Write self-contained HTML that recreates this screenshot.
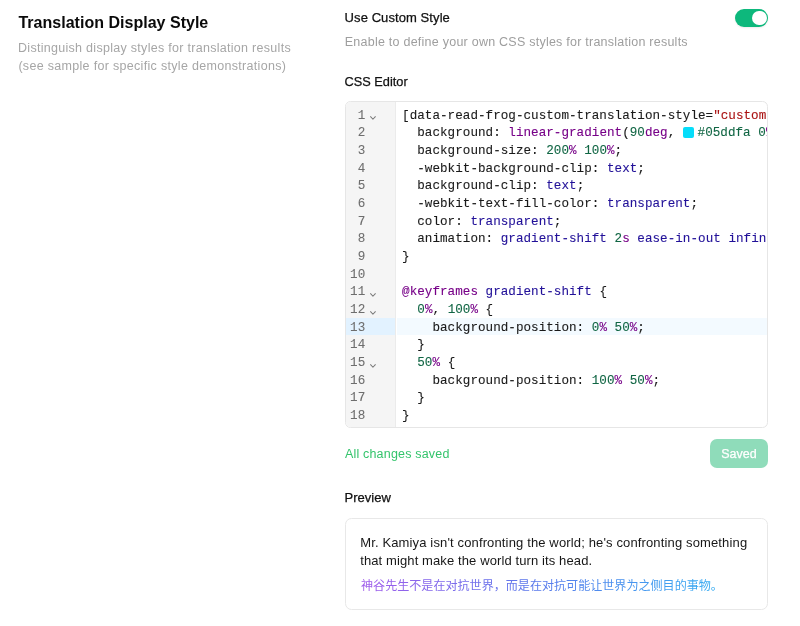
<!DOCTYPE html>
<html lang="en">
<head>
<meta charset="utf-8">
<title>Translation Display Style</title>
<style>
html,body{margin:0;padding:0;background:#fff;}
body{width:800px;height:626px;position:relative;overflow:hidden;will-change:transform;font-family:"Liberation Sans",sans-serif;color:#0a0a0a;-webkit-font-smoothing:antialiased;}
.t{position:absolute;white-space:pre;line-height:20px;margin:0;}
.title{left:18.4px;top:12.5px;font-size:16px;font-weight:700;letter-spacing:0.02px;color:#0a0a0a;}
.desc{font-size:12.5px;color:#a6a6a6;}
.d1{left:18px;top:37.7px;letter-spacing:0.29px;}
.d2{left:18.4px;top:56.4px;letter-spacing:0.31px;}
.lab{font-size:13px;color:#111;-webkit-text-stroke-width:0.25px;}
.l1{left:344.6px;top:8.2px;letter-spacing:0.08px;}
.sub{left:344.8px;top:32.1px;font-size:12.5px;letter-spacing:0.24px;color:#9e9e9e;}
.l2{left:344.6px;top:71.6px;font-size:12.75px;}
.l3{left:344.6px;top:488.3px;}
.toggle{position:absolute;left:735px;top:9px;width:33.4px;height:18.2px;border-radius:10px;background:#0db87c;box-shadow:0 1px 2px rgba(0,0,0,0.08);}
.toggle i{position:absolute;right:1.9px;top:1.8px;width:14.5px;height:14.5px;border-radius:50%;background:#fff;}
.editor{position:absolute;left:345px;top:101px;width:420.7px;height:325px;border:1px solid #e6e6e6;border-radius:5.5px;overflow:hidden;background:#fff;font-family:"Liberation Mono",monospace;font-size:12.6px;letter-spacing:0.03px;-webkit-text-stroke-width:0.1px;}
.gutter{position:absolute;left:0;top:0;bottom:0;width:48.6px;background:#f5f5f5;border-right:1px solid #ebebeb;color:#6e6e6e;-webkit-text-stroke-width:0.08px;padding-top:5.7px;}
.gl{position:relative;height:17.66px;line-height:17.66px;}
.band{position:absolute;left:0;right:0;top:215.5px;height:17.2px;}
.gutter .band{background:#e2f2ff;}
.code .band{background:#f3faff;}
.ln{position:absolute;right:29.3px;top:0;}
.fold{position:absolute;left:23.8px;top:8.7px;width:5.9px;height:4.1px;fill:none;stroke:#777;stroke-width:1.1;stroke-linecap:round;stroke-linejoin:round;}
.code{position:absolute;left:50.5px;top:0;right:0;bottom:0;padding-top:5.7px;color:#1a1a1a;}
.cl{position:relative;height:17.66px;line-height:17.66px;white-space:pre;padding-left:5.6px;}
.k{color:#770088;} .n{color:#116644;} .a{color:#221199;} .s{color:#aa1111;}
.sw{display:inline-block;width:11.4px;height:11.4px;border-radius:2px;margin-right:3.3px;vertical-align:-1.6px;}
.saved{left:344.9px;top:444px;font-size:12.5px;letter-spacing:0.19px;color:#34c46c;}
.btn{position:absolute;left:710px;top:439px;width:58px;height:28.6px;border-radius:7px;background:#8fdcba;color:#fff;font-size:12.5px;line-height:30.6px;text-align:center;-webkit-text-stroke-width:0.25px;}
.preview{position:absolute;left:345px;top:518.3px;width:420.7px;height:89.3px;border:1px solid #e8e8e8;border-radius:6.5px;background:#fff;}
.p{font-size:13px;color:#171717;letter-spacing:0.11px;}
.p1{left:360.2px;top:533.4px;letter-spacing:0.14px;}
.p2{left:360.2px;top:550.8px;}
.cjk{position:absolute;left:360.5px;top:575px;width:364px;height:20px;overflow:visible;}
.sr{position:absolute;left:360px;top:580px;font-size:1px;line-height:1px;color:transparent;white-space:pre;overflow:hidden;width:1px;height:1px;}
</style>
</head>
<body>
<h2 class="t title">Translation Display Style</h2>
<p class="t desc d1">Distinguish display styles for translation results</p>
<p class="t desc d2">(see sample for specific style demonstrations)</p>

<div class="t lab l1">Use Custom Style</div>
<p class="t sub">Enable to define your own CSS styles for translation results</p>
<div class="toggle"><i></i></div>

<div class="t lab l2">CSS Editor</div>
<div class="editor">
<div class="gutter"><div class="band"></div>
<div class="gl"><span class="ln">1</span><svg class="fold" viewBox="0 0 6.4 4.4"><path d="M0.6 0.7 L3.2 3.5 L5.8 0.7"/></svg></div>
<div class="gl"><span class="ln">2</span></div>
<div class="gl"><span class="ln">3</span></div>
<div class="gl"><span class="ln">4</span></div>
<div class="gl"><span class="ln">5</span></div>
<div class="gl"><span class="ln">6</span></div>
<div class="gl"><span class="ln">7</span></div>
<div class="gl"><span class="ln">8</span></div>
<div class="gl"><span class="ln">9</span></div>
<div class="gl"><span class="ln">10</span></div>
<div class="gl"><span class="ln">11</span><svg class="fold" viewBox="0 0 6.4 4.4"><path d="M0.6 0.7 L3.2 3.5 L5.8 0.7"/></svg></div>
<div class="gl"><span class="ln">12</span><svg class="fold" viewBox="0 0 6.4 4.4"><path d="M0.6 0.7 L3.2 3.5 L5.8 0.7"/></svg></div>
<div class="gl act"><span class="ln">13</span></div>
<div class="gl"><span class="ln">14</span></div>
<div class="gl"><span class="ln">15</span><svg class="fold" viewBox="0 0 6.4 4.4"><path d="M0.6 0.7 L3.2 3.5 L5.8 0.7"/></svg></div>
<div class="gl"><span class="ln">16</span></div>
<div class="gl"><span class="ln">17</span></div>
<div class="gl"><span class="ln">18</span></div>
</div>
<div class="code"><div class="band"></div>
<div class="cl">[data-read-frog-custom-translation-style=<span class="s">"custom-gradient"</span>] {</div>
<div class="cl">  background: <span class="k">linear-gradient</span>(<span class="n">90</span><span class="k">deg</span>, <i class="sw" style="background:#05ddfa"></i><span class="n">#05ddfa</span> <span class="n">0</span><span class="k">%</span>, <i class="sw" style="background:#8b5cf6"></i><span class="n">#8b5cf6</span> <span class="n">50</span><span class="k">%</span>);</div>
<div class="cl">  background-size: <span class="n">200</span><span class="k">%</span> <span class="n">100</span><span class="k">%</span>;</div>
<div class="cl">  -webkit-background-clip: <span class="a">text</span>;</div>
<div class="cl">  background-clip: <span class="a">text</span>;</div>
<div class="cl">  -webkit-text-fill-color: <span class="a">transparent</span>;</div>
<div class="cl">  color: <span class="a">transparent</span>;</div>
<div class="cl">  animation: <span class="a">gradient-shift</span> <span class="n">2</span><span class="k">s</span> <span class="a">ease-in-out</span> <span class="a">infinite</span>;</div>
<div class="cl">}</div>
<div class="cl"></div>
<div class="cl"><span class="k">@keyframes</span> <span class="a">gradient-shift</span> {</div>
<div class="cl">  <span class="n">0</span><span class="k">%</span>, <span class="n">100</span><span class="k">%</span> {</div>
<div class="cl act">    background-position: <span class="n">0</span><span class="k">%</span> <span class="n">50</span><span class="k">%</span>;</div>
<div class="cl">  }</div>
<div class="cl">  <span class="n">50</span><span class="k">%</span> {</div>
<div class="cl">    background-position: <span class="n">100</span><span class="k">%</span> <span class="n">50</span><span class="k">%</span>;</div>
<div class="cl">  }</div>
<div class="cl">}</div>
</div>
</div>

<div class="t saved">All changes saved</div>
<div class="btn">Saved</div>

<div class="t lab l3">Preview</div>
<div class="preview"></div>
<p class="t p p1">Mr. Kamiya isn't confronting the world; he's confronting something</p>
<p class="t p p2">that might make the world turn its head.</p>
<svg class="cjk" viewBox="0 0 364 20" aria-hidden="true">
<defs><linearGradient id="g" gradientUnits="userSpaceOnUse" x1="0" y1="0" x2="358" y2="0">
<stop offset="0" stop-color="#a25deb"/><stop offset="0.47" stop-color="#5c78eb"/><stop offset="1" stop-color="#38aef2"/>
</linearGradient></defs>
<text x="0" y="15.3" font-size="12.07" fill="url(#g)" style="font-family:'Liberation Sans','Noto Sans CJK SC',sans-serif;">神谷先生不是在对抗世界，而是在对抗可能让世界为之侧目的事物。</text>
</svg>
<span class="sr">神谷先生不是在对抗世界，而是在对抗可能让世界为之侧目的事物。</span>
</body>
</html>
